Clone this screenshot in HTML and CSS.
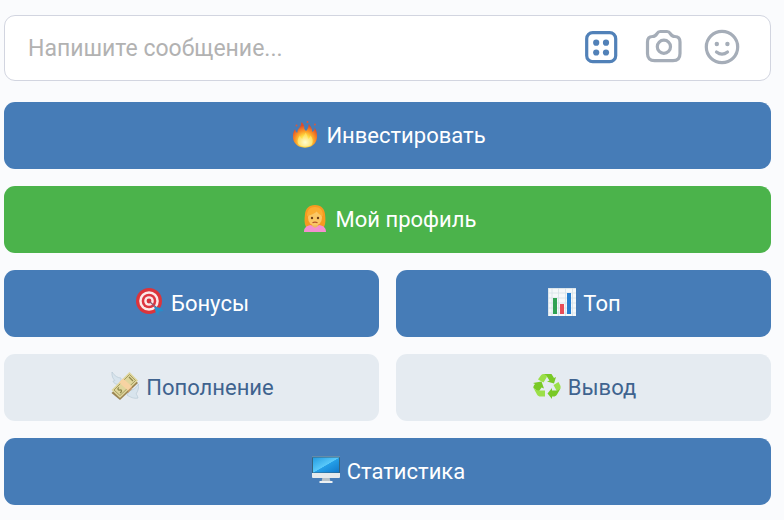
FILE: index.html
```html
<!DOCTYPE html>
<html lang="ru">
<head>
  <meta charset="UTF-8">
  <meta name="viewport" content="width=device-width, initial-scale=1">
  <title>Сообщения</title>
  <link rel="stylesheet" href="styles.css">
</head>
<body>
  <form class="composer">
    <input class="message" type="text" placeholder="Напишите сообщение..." aria-label="Напишите сообщение">
    <button class="tool active" type="button" aria-label="Клавиатура бота">
      <svg viewBox="0 0 40 40" fill="none" stroke="currentColor" stroke-width="3.2">
        <rect x="4.7" y="4.700" width="29" height="29" rx="6"/>
        <g fill="currentColor" stroke="none">
          <circle cx="14.2" cy="14.700" r="3.1"/><circle cx="24" cy="14.700" r="3.1"/>
          <circle cx="14.2" cy="24.500" r="3.1"/><circle cx="24" cy="24.500" r="3.1"/>
        </g>
      </svg>
    </button>
    <button class="tool" type="button" aria-label="Прикрепить фото">
      <svg viewBox="0 0 40 40" fill="none" stroke="currentColor" stroke-width="3.2" stroke-linejoin="round">
        <path d="M10.5 8.500C13.5 8.500 14 7.300 15 5.600C15.9 4 16.700 3.500 18.300 3.500H25C26.600 3.500 27.400 4 28.300 5.600C29.300 7.300 29.800 8.500 32.800 8.500C36.300 8.500 38 10.400 38 14V25.500C38 30.500 35.500 32.700 31 32.700H12.500C8 32.700 5.500 30.500 5.500 25.500V14C5.500 10.400 7 8.500 10.500 8.500Z"/>
        <circle cx="21.9" cy="18.700" r="6.6"/>
      </svg>
    </button>
    <button class="tool" type="button" aria-label="Смайлы">
      <svg viewBox="0 0 40 40" fill="none" stroke="currentColor" stroke-width="3.2" stroke-linecap="round">
        <circle cx="20" cy="19" r="15.700"/>
        <path d="M14.500 24Q20 28.300 25.500 24"/>
        <g fill="currentColor" stroke="none"><circle cx="14.800" cy="16" r="2.200"/><circle cx="25.400" cy="16" r="2.200"/></g>
      </svg>
    </button>
  </form>

  <div class="keyboard">
    <button class="key primary wide" type="button">
      <svg class="emoji" viewBox="0 0 28 28" aria-hidden="true">
        <defs>
          <radialGradient id="flame" cx=".5" cy=".75" r=".62">
            <stop offset="0" stop-color="#fffbc0"/><stop offset=".35" stop-color="#ffdf45"/>
            <stop offset=".65" stop-color="#fb9725"/><stop offset="1" stop-color="#dc4c2b"/>
          </radialGradient>
          <radialGradient id="core" cx=".5" cy=".7" r=".7">
            <stop offset="0" stop-color="#fffdd0"/><stop offset="1" stop-color="#ffd63c"/>
          </radialGradient>
        </defs>
        <path fill="url(#flame)" d="M8 26.500C3.500 24 1.500 20 2 15C2.200 12.500 3 10.500 4 9C4.500 11 5 12 6.300 13C6.500 9 8.500 8 9.800 5.500C10.300 4 10.300 3 10.300 2C12.500 3.500 13.500 6 13.300 9L15 11C17 9 17.800 6.500 17.500 4C20 6 21.300 9 21.200 12L23 10.500C23.600 9.500 23.700 8.500 23.700 7.500C25.500 10 26.500 14 26 18C25.500 22 23 25 20 26.500C16 28 12 28 8 26.500Z"/>
        <path fill="url(#core)" d="M8 25C5.500 21.500 7 18 9 15.500C9.500 17.500 10 18.500 11.500 19C12 16 14 14.500 14.500 12.500C16.500 15 16.500 17 17 19C18.500 18 19 17 19.500 15.500C22 18.500 22.500 22 20.500 25C17 27 12 27 8 25Z"/>
        <g fill="#dc573b"><circle cx="5.500" cy="5.500" r="1"/><circle cx="16.500" cy="2" r="1"/><circle cx="24" cy="4.500" r=".9"/></g>
      </svg>
      <span>Инвестировать</span>
    </button>

    <button class="key positive wide" type="button">
      <svg class="emoji" viewBox="0 0 28 28" aria-hidden="true">
        <path fill="#f69a20" d="M14 1C7.500 1 4.500 5 4 10C3.500 15 3 19 5 23H23C25 19 24.500 15 24 10C23.500 5 20.500 1 14 1Z"/>
        <path fill="#f58fd0" d="M3 28C3 24 5 22 9.500 21L14 23L18.500 21C23 22 25 24 25 28Z"/>
        <path fill="#eeb866" d="M11 18H17V22Q14 25.500 11 22Z"/>
        <ellipse cx="14" cy="13.500" rx="7" ry="8" fill="#fbc765"/>
        <path fill="#fbad31" d="M6 12C6 6 9 3 14 3C19 3 22 6 22 12C19.500 11 17 9.500 15.800 7.500C13.500 10 10 11 6 12Z"/>
        <g fill="#704019"><circle cx="11" cy="14" r="1.200"/><circle cx="17" cy="14" r="1.200"/></g>
        <path d="M11.500 18.800Q14 17.300 16.500 18.800" fill="none" stroke="#b5562d" stroke-width="1.200"/>
      </svg>
      <span>Мой профиль</span>
    </button>

    <button class="key primary" type="button">
      <svg class="emoji" viewBox="0 0 28 28" aria-hidden="true">
        <circle cx="13" cy="13" r="13" fill="#dc343b"/>
        <circle cx="13" cy="13" r="9.800" fill="#fbe9e8"/>
        <circle cx="13" cy="13" r="7.300" fill="#de3540"/>
        <circle cx="13" cy="13" r="4.800" fill="#fbe9e8"/>
        <circle cx="13" cy="13" r="2.400" fill="#d92e39"/>
        <path d="M13.500 13.500L22 21" stroke="#8d5970" stroke-width="1.300"/>
        <path fill="#278ec9" d="M18 18.500L20 25L22.500 27.500L23 23.500L27.500 23L25 20Z"/>
      </svg>
      <span>Бонусы</span>
    </button>

    <button class="key primary" type="button">
      <svg class="emoji" viewBox="0 0 28 28" aria-hidden="true">
        <path fill="#f5f8fa" d="M0 0H28V28H0Z"/>
        <path d="M0 .5H28M0 5H28M0 10H28M0 15H28M0 20H28M0 25H28M.5 0V28M4 0V28M10.500 0V28M17.500 0V28M24.500 0V28" stroke="#d5e1e7" stroke-width=".8"/>
        <path fill="#31a254" d="M5 10H9V26H5Z"/>
        <path fill="#e84d58" d="M12 16H16V26H12Z"/>
        <path fill="#267fd0" d="M19 5H23V26H19Z"/>
      </svg>
      <span>Топ</span>
    </button>

    <button class="key secondary" type="button">
      <svg class="emoji" viewBox="0 0 28 28" aria-hidden="true">
        <path fill="#d8e4ed" stroke="#b9cad5" stroke-width=".7" d="M10 6C7 6 3.500 4 1 0C.5 4 2 7 4 8.500C3 9 2.500 9 2 9C3 12 6 13 10 12ZM18 19C22 18 25.500 16 27.500 12C28 16 27 19 25 22C26 23 26.500 24 27 26C23 27 19 25 16 23Z"/>
        <path fill="#9b8553" d="M.5 21L18.500 3L27 11L9 28Z"/>
        <path fill="#dfd69c" d="M.5 18L18.500 0L27 8.500L9 26Z"/>
        <path fill="none" stroke="#a59c62" d="M3 18L18.500 2.500L24.500 8.500L9 23.500Z"/>
        <path fill="#f7d3a2" d="M8 10.500L12 6.500L21 14.500L17 18.500Z"/>
        <path fill="#c79b66" d="M17 18.500L21 14.500V17L17 21Z"/>
        <path d="M8 15.500C6 16.500 7 18.500 9 18C11 17.500 11 20 9 21M18 5L22 9" fill="none" stroke="#918a50" stroke-width="1.300"/>
      </svg>
      <span>Пополнение</span>
    </button>

    <button class="key secondary" type="button">
      <svg class="emoji" viewBox="0 0 28 28" aria-hidden="true">
        <path fill="#79c926" d="M10 2H18.500L21 6L23 5L21 11.500L14 9.500L16.500 8.500L13.500 4Z"/>
        <path fill="#9bdf48" d="M10 2C8.500 2.200 8 3.500 5 7.500L10.500 10.500L14 4.700C13 3 12 2 10 2Z"/>
        <path fill="#79c926" d="M0 11L8.500 9.500L11 16.500L8.500 15.500L5.500 20L.5 16C0 15 .5 14 2 12Z"/>
        <path fill="#9bdf48" d="M.5 16L4 22.500C5 24 6 24.500 7.500 24.500H12V18.500H6C3.500 18.500 1.500 17.500 .5 16Z"/>
        <path fill="#9bdf48" d="M20.500 13L25.500 10L27.500 14C28 16 27 17.500 25.500 18.500H23.500Z"/>
        <path fill="#79c926" d="M27.800 16L24 22.500C23 24 22 24.500 20.500 24.500H19V27L14.500 21.500L19 16V18.500H23C25 18.500 27 17.500 27.800 16Z"/>
      </svg>
      <span>Вывод</span>
    </button>

    <button class="key primary wide" type="button">
      <svg class="emoji" viewBox="0 0 28 28" aria-hidden="true">
        <defs>
          <linearGradient id="screen" x1="0" y1="0" x2="1" y2="1">
            <stop stop-color="#249be0"/><stop offset=".5" stop-color="#59c9fa"/><stop offset=".52" stop-color="#249fe8"/><stop offset="1" stop-color="#1178cb"/>
          </linearGradient>
        </defs>
        <path fill="#b8c2c8" d="M10.500 21H17.500L18.500 26H9.500Z"/>
        <path fill="#edf1f3" d="M7.500 25H20.500V27H7.500Z"/>
        <rect y=".5" width="28" height="21.500" rx="1" fill="#e6eaec"/>
        <path fill="#36647f" d="M0 1.500Q0 .5 1 .5H27Q28 .5 28 1.500V17H0Z"/>
        <path fill="url(#screen)" d="M1 1.500H27V16.500H1Z"/>
      </svg>
      <span>Статистика</span>
    </button>
  </div>
</body>
</html>
```
FILE: styles.css
```css
body {
  margin: 0;
  padding: 15px 13px 15px 4px;
  background-color: #fafbfd;
  font-family: Roboto, sans-serif;
}
button, input {
  font-family: inherit;
  font-size: 22px;
}
.composer {
  display: flex;
  align-items: center;
  gap: 20px;
  height: 66px;
  box-sizing: border-box;
  margin-bottom: 21px;
  padding: 0 28px 0 23px;
  background-color: #fff;
  border: 1px solid #d2d5e0;
  border-radius: 11px;
}
.message {
  flex: 1;
  min-width: 0;
  padding: 0;
  border: none;
  outline: none;
  background: none;
  color: #222;
  font-size: 23px;
}
.message::placeholder {
  color: #b2b2b2;
  opacity: 1;
}
.tool {
  width: 40px;
  height: 40px;
  flex-shrink: 0;
  padding: 0;
  border: none;
  background: none;
  color: #a5adb8;
  cursor: pointer;
}
.tool svg {
  display: block;
}
.tool.active {
  color: #5181b8;
}
.keyboard {
  display: grid;
  grid-template-columns: 1fr 1fr;
  gap: 17px;
}
.key {
  display: flex;
  align-items: center;
  justify-content: center;
  gap: 7px;
  height: 67px;
  padding: 0 16px 0 18px;
  border: none;
  border-radius: 11px;
  color: #fff;
  cursor: pointer;
}
.wide {
  grid-column: 1 / -1;
}
.primary {
  background-color: #467cb7;
}
.positive {
  background-color: #4bb34b;
}
.secondary {
  background-color: #e5ebf1;
  color: #3f638f;
}
.emoji {
  width: 28px;
  height: 28px;
  flex-shrink: 0;
  margin-bottom: 3px;
}
```
